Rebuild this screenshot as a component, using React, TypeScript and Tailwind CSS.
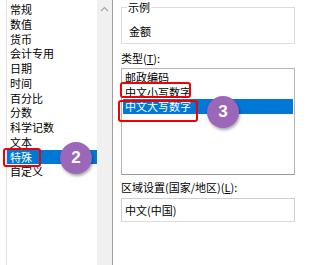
import React from "react";

const leftItems = ["常规", "数值", "货币", "会计专用", "日期", "时间", "百分比", "分数", "科学记数", "文本", "特殊", "自定义"];
const typeItems = ["邮政编码", "中文小写数字", "中文大写数字"];

export default function App() {
  return (
    <div
      className="relative flex w-[313px] h-[265px] overflow-hidden bg-white text-[11px] text-black"
      style={{ fontFamily: '"Noto Sans CJK SC", "Noto Sans", sans-serif' }}
    >
      {/* left list */}
      <div className="flex w-[113px] shrink-0 border-r border-[#a0a0a0]">
        <div className="w-[97px] ml-[6px] border-l border-[#e3e3e3] pt-[2px] flex flex-col">
          {leftItems.map((t, i) => (
            <div
              key={t}
              className={
                "h-[14.75px] leading-[14.75px] pl-[3px] whitespace-nowrap " +
                (i === 10 ? "bg-[#0078d7] text-white" : "")
              }
            >
              {t}
            </div>
          ))}
        </div>
        <div className="w-[15px] -ml-[6px] bg-[#f0f0f0] flex justify-center pt-[6px]">
          <svg width="9" height="6" viewBox="0 0 9 6">
            <path d="M1 5 L4.5 1.5 L8 5" fill="none" stroke="#a8a8a8" strokeWidth="1.2" />
          </svg>
        </div>
      </div>

      {/* right panel */}
      <div className="flex flex-col pl-[8px] w-[182px] shrink-0">
        <div className="relative mt-[7px] h-[37px] border border-[#dcdcdc]">
          <span className="absolute -top-[9px] left-[5px] bg-white px-[1px] leading-[16px]">示例</span>
          <div className="pl-[7px] pt-[15px] leading-[16px]">金额</div>
        </div>
        <div className="mt-[6px] leading-[16px]">
          类型(<span className="underline">T</span>):
        </div>
        <div className="mt-[2px] h-[107px] border border-[#b4b4b4] border-b-[#9a9a9a] p-[1px] flex flex-col">
          {typeItems.map((t, i) => (
            <div
              key={t}
              className={
                "h-[14.5px] leading-[14.5px] pl-[2px] whitespace-nowrap " +
                (i === 2 ? "bg-[#0078d7] text-white" : "")
              }
            >
              {t}
            </div>
          ))}
        </div>
        <div className="mt-[4px] leading-[16px]">
          区域设置(国家/地区)(<span className="underline">L</span>):
        </div>
        <div className="mt-[3px] h-[24px] border border-[#cfcfcf] border-b-[#dcdcdc] pl-[3px] leading-[22px]">
          中文(中国)
        </div>
      </div>

      {/* red highlight boxes */}
      <div className="absolute left-[3px] top-[148px] w-[38px] h-[19px] border-[2.5px] border-[#f00000] rounded-[3px]" />
      <div className="absolute left-[120px] top-[82px] w-[71px] h-[16px] border-[2.5px] border-[#f00000] rounded-[3px]" />
      <div className="absolute left-[118px] top-[100px] w-[80px] h-[22px] border-[2.5px] border-[#f00000] rounded-[3px]" />

      {/* badges */}
      <div className="absolute left-[60px] top-[142px] w-[32px] h-[32px] rounded-full bg-[#9b67b8] text-white font-bold text-[17px] flex items-center justify-center shadow-[1px_2px_3px_rgba(0,0,0,0.35)]" style={{ fontFamily: '"Liberation Sans", Arial, sans-serif' }}>
        2
      </div>
      <div className="absolute left-[207px] top-[96px] w-[32px] h-[32px] rounded-full bg-[#9b67b8] text-white font-bold text-[17px] flex items-center justify-center shadow-[1px_2px_3px_rgba(0,0,0,0.35)]" style={{ fontFamily: '"Liberation Sans", Arial, sans-serif' }}>
        3
      </div>
    </div>
  );
}
